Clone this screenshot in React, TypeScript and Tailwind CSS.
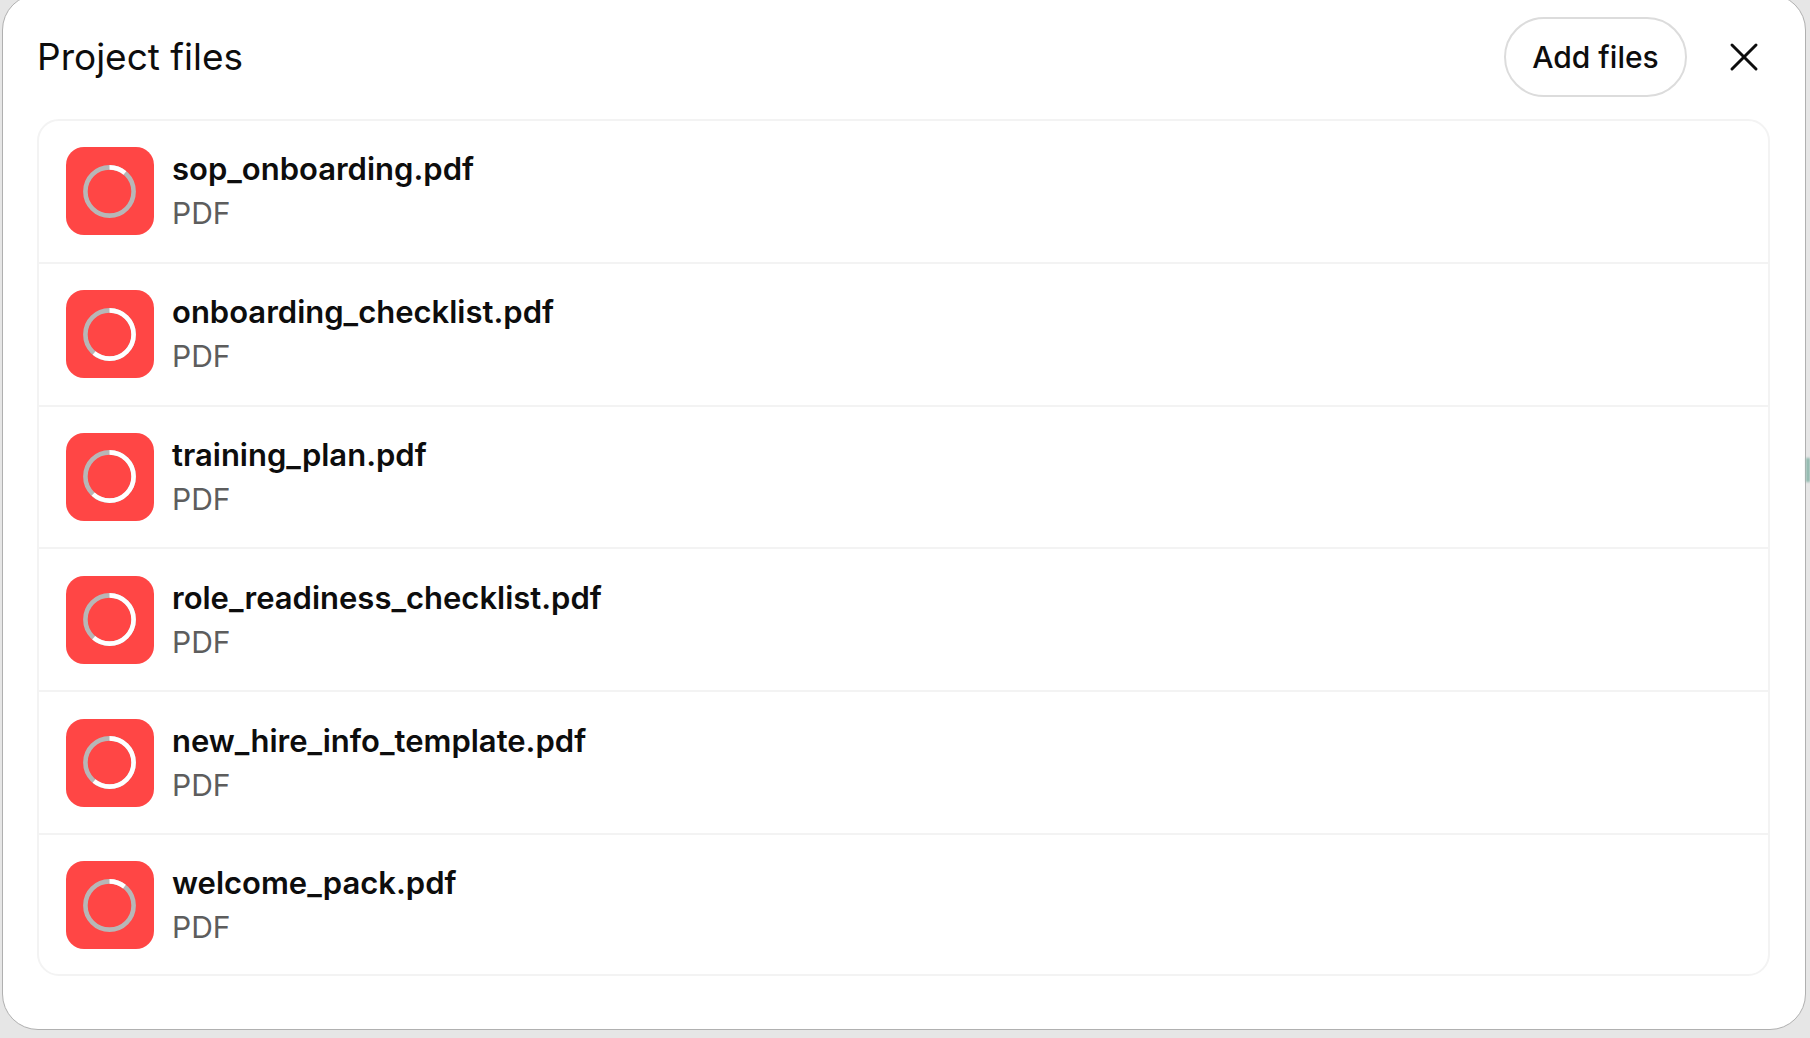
import { X } from "lucide-react";

const FILES = [
  { name: "sop_onboarding.pdf", progress: 0.11 },
  { name: "onboarding_checklist.pdf", progress: 0.607 },
  { name: "training_plan.pdf", progress: 0.615 },
  { name: "role_readiness_checklist.pdf", progress: 0.61 },
  { name: "new_hire_info_template.pdf", progress: 0.607 },
  { name: "welcome_pack.pdf", progress: 0.106 },
];

function Spinner({ progress }: { progress: number }) {
  const r = 24.1;
  const c = 2 * Math.PI * r;
  return (
    <svg width="53" height="53" viewBox="0 0 53 53" className="-rotate-90">
      <circle cx="26.5" cy="26.5" r={r} fill="none" stroke="#b7b7b7" strokeWidth="4.6" />
      <circle
        cx="26.5"
        cy="26.5"
        r={r}
        fill="none"
        stroke="#ffffff"
        strokeWidth="4.6"
        strokeDasharray={`${c * progress} ${c}`}
      />
    </svg>
  );
}

function FileRow({ name, progress }: { name: string; progress: number }) {
  return (
    <div className="flex h-[142.8px] items-start gap-[18px] border-b-2 border-[#f3f3f3] pt-[26.4px] pr-[26px] pl-[27px] last:h-[139px] last:border-b-0">
      <div className="flex size-[88px] shrink-0 items-center justify-center rounded-[18px] bg-[#ff4645] pr-[2px]">
        <Spinner progress={progress} />
      </div>
      <div className="flex flex-col">
        <div className="text-[31px] leading-[44px] font-semibold text-[#0d0d0d]">{name}</div>
        <div className="text-[30px] leading-[44px] text-[#5d5d5d]">PDF</div>
      </div>
    </div>
  );
}

export default function App() {
  return (
    <div className="relative h-[1038px] overflow-hidden bg-[#e6e6e6] pr-[4px] pl-[2px] font-['Inter',sans-serif]">
      <div className="-mt-[6px] flex h-[1036px] flex-col rounded-[36px] border border-[#b0b0b0] bg-white pr-[35px] pl-[34px]">
        <div className="flex h-[124px] shrink-0 items-center justify-between">
          <h2 className="text-[37px] font-normal text-[#0d0d0d]">Project files</h2>
          <div className="flex items-center gap-[33px]">
            <button className="h-[80px] w-[183px] rounded-full border-2 border-[#dcdcdc] text-[30px] font-medium text-[#0d0d0d]">
              Add files
            </button>
            <X className="mr-[2px] size-[48px] text-[#0d0d0d]" strokeWidth={1.5} />
          </div>
        </div>
        <div className="rounded-[22px] border-2 border-[#f3f3f3]">
          {FILES.map((f) => (
            <FileRow key={f.name} name={f.name} progress={f.progress} />
          ))}
        </div>
      </div>
      {/* sliver of the page behind the dialog */}
      <div className="absolute top-[458px] right-0 h-[24px] w-[4px] bg-[#8fb8ae] blur-[1px]" />
    </div>
  );
}
